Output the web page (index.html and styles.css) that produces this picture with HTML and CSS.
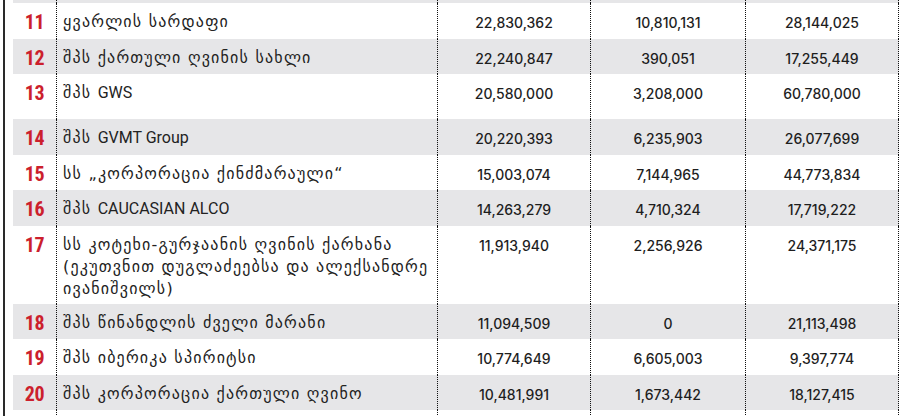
FILE: index.html
```html
<!DOCTYPE html>
<html lang="ka">
<head>
<meta charset="utf-8">
<title>ღვინის კომპანიები</title>
<link rel="stylesheet" href="styles.css">
</head>
<body>
<div class="frame">
  <div class="table">
    <div class="row gray sliver"><div class="c num"></div><div class="c name"></div><div class="c val"></div><div class="c val w"></div><div class="c val"></div></div>
    <div class="row"><div class="c num">11</div><div class="c name">ყვარლის სარდაფი</div><div class="c val">22,830,362</div><div class="c val w">10,810,131</div><div class="c val">28,144,025</div></div>
    <div class="row gray"><div class="c num">12</div><div class="c name">შპს ქართული ღვინის სახლი</div><div class="c val">22,240,847</div><div class="c val w">390,051</div><div class="c val">17,255,449</div></div>
    <div class="row tall"><div class="c num">13</div><div class="c name">შპს <span class="lat">GWS</span></div><div class="c val">20,580,000</div><div class="c val w">3,208,000</div><div class="c val">60,780,000</div></div>
    <div class="row gray"><div class="c num">14</div><div class="c name">შპს <span class="lat">GVMT Group</span></div><div class="c val">20,220,393</div><div class="c val w">6,235,903</div><div class="c val">26,077,699</div></div>
    <div class="row"><div class="c num">15</div><div class="c name">სს „კორპორაცია ქინძმარაული“</div><div class="c val">15,003,074</div><div class="c val w">7,144,965</div><div class="c val">44,773,834</div></div>
    <div class="row gray"><div class="c num">16</div><div class="c name">შპს <span class="lat">CAUCASIAN ALCO</span></div><div class="c val">14,263,279</div><div class="c val w">4,710,324</div><div class="c val">17,719,222</div></div>
    <div class="row multi"><div class="c num">17</div><div class="c name">სს კოტეხი-გურჯაანის ღვინის ქარხანა (ეკუთვნით დუგლაძეებსა და ალექსანდრე ივანიშვილს)</div><div class="c val">11,913,940</div><div class="c val w">2,256,926</div><div class="c val">24,371,175</div></div>
    <div class="row gray"><div class="c num">18</div><div class="c name">შპს წინანდლის ძველი მარანი</div><div class="c val">11,094,509</div><div class="c val w">0</div><div class="c val">21,113,498</div></div>
    <div class="row"><div class="c num">19</div><div class="c name">შპს იბერიკა სპირიტსი</div><div class="c val">10,774,649</div><div class="c val w">6,605,003</div><div class="c val">9,397,774</div></div>
    <div class="row gray"><div class="c num">20</div><div class="c name">შპს კორპორაცია ქართული ღვინო</div><div class="c val">10,481,991</div><div class="c val w">1,673,442</div><div class="c val">18,127,415</div></div>
    <div class="row end"><div class="c num"></div><div class="c name"></div><div class="c val"></div><div class="c val w"></div><div class="c val"></div></div>
  </div>
</div>
</body>
</html>
```

FILE: styles.css
```css
html, body {
  margin: 0;
  padding: 0;
  background: #fff;
}

.frame {
  margin-left: 3px;
  width: 898px;
  height: 416px;
  overflow: hidden;
  border-left: 2px solid #2a2a2a;
  border-right: 2px solid #2a2a2a;
  padding-left: 8px;
  box-sizing: content-box;
}

.table {
  width: 886px;
}

.row {
  display: grid;
  grid-template-columns: 44px 381px 153px 155px 153px;
  height: 35.5px;
}

.row.gray {
  background: #e6e6e8;
}

.row.sliver {
  height: 3px;
}

.row.tall {
  height: 45px;
}

.row.multi {
  height: 78px;
}

.row.end {
  height: 6px;
}

.c {
  border-right: 1px dotted #111;
  box-sizing: border-box;
  padding-top: 8px;
  line-height: 22px;
  overflow: hidden;
}

.num {
  text-align: center;
  font-family: "Liberation Sans Narrow", "Roboto Condensed", Roboto, sans-serif;
  font-weight: 700;
  font-size: 20px;
  color: #cc1f2d;
  letter-spacing: -0.4px;
}

.name {
  padding-left: 6px;
  padding-right: 4px;
  font-family: "DejaVu Sans", sans-serif;
  font-size: 16px;
  letter-spacing: 1.2px;
  color: #222;
}

.lat {
  font-family: Roboto, sans-serif;
  font-size: 16px;
  letter-spacing: 0;
}

.val {
  text-align: center;
  font-family: Inter, "Open Sans", sans-serif;
  font-size: 14px;
  font-weight: 500;
  color: #1e1e1e;
  padding-top: 9px;
}
```
